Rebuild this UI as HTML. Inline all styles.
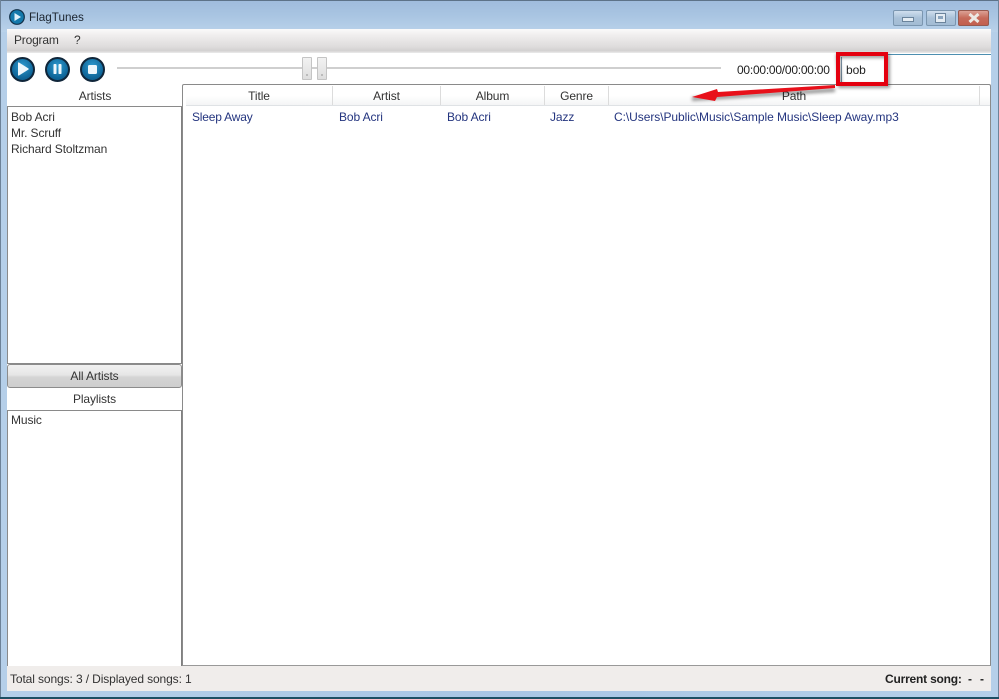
<!DOCTYPE html>
<html>
<head>
<meta charset="utf-8">
<style>
html,body{margin:0;padding:0;background:#fff}
#w{position:relative;width:999px;height:699px;overflow:hidden;font:12px "Liberation Sans",sans-serif;letter-spacing:-.11px;color:#222;background:linear-gradient(90deg,#b5cfe9,#a9c6e4 50%,#b5cfe9)}
#w div{position:absolute;box-sizing:border-box}
.t{white-space:nowrap;line-height:14px;height:14px}
.c{text-align:center}
.b{color:#24357f}
.btn{width:25px;height:25px;border-radius:50%;background:radial-gradient(circle at 50% 35%,#2f9bd0,#0d6396 70%);border:2px solid #10263a;top:57px}
.th{width:10px;height:23px;top:57px;border:1px solid #c4c4c4;background:linear-gradient(#f2f2f2,#dedede);border-radius:1px}
.th:after{content:"";position:absolute;left:3px;bottom:3px;width:2px;height:2px;background:#bbb}
.sep{top:86px;width:1px;height:19px;background:#dcdcdc}
.wb{top:10px;height:16px;border:1px solid #7b96b0;border-radius:2px;background:linear-gradient(#d0dfee,#a9c1d8 50%,#a3bcd4)}
</style>
</head>
<body>
<div id="w">
<div style="left:0;top:0;width:999px;height:32px;background:linear-gradient(#9fbbdc,#a9c5e2 50%,#b9d2ea)"></div>
<div style="left:0;top:0;width:999px;height:1px;background:#5d7288"></div>
<div style="left:0;top:0;width:1px;height:699px;background:#6d8298"></div>
<div style="left:998px;top:0;width:1px;height:699px;background:#6d8298"></div>
<div style="left:0;top:697px;width:999px;height:2px;background:#1d4f63"></div>

<svg style="position:absolute;left:9px;top:9px" width="16" height="16" viewBox="0 0 16 16"><circle cx="8" cy="8" r="7.3" fill="#1479ac" stroke="#123049" stroke-width="1.2"/><path d="M5.5 4 L12 8 L5.5 12Z" fill="#dff1fb"/></svg>
<div class="t" style="left:29px;top:11px;font-size:11.7px;letter-spacing:0;color:#1c2530">FlagTunes</div>

<div style="left:7px;top:29px;width:984px;height:637px;background:#fff"></div>
<div style="left:7px;top:29px;width:984px;height:24px;background:linear-gradient(#fbfafa 0,#f0eeee 25%,#dedcdc 75%,#d2d0d0 90%,#ececec 100%)"></div>
<div class="t" style="left:14px;top:33px;letter-spacing:-.2px;color:#333">Program</div>
<div class="t" style="left:74px;top:33px;color:#333">?</div>

<div style="left:838px;top:54px;width:153px;height:1px;background:#4d8fb0"></div>

<div class="btn" style="left:10px"></div>
<div class="btn" style="left:45px"></div>
<div class="btn" style="left:80px"></div>
<svg style="position:absolute;left:0;top:0" width="120" height="90" viewBox="0 0 120 90"><path d="M18 63 Q18 62 19 62.5 L28.5 68.5 Q29 69 28.5 69.5 L19 75.5 Q18 76 18 75Z" fill="#eef7fc"/><rect x="53.5" y="64" width="3" height="10" rx=".8" fill="#eef7fc"/><rect x="58.5" y="64" width="3" height="10" rx=".8" fill="#eef7fc"/><rect x="88" y="65" width="9" height="9" rx="1.5" fill="#eef7fc"/></svg>

<div style="left:117px;top:67px;width:604px;height:2px;background:#cfcfcf"></div>
<div class="th" style="left:302px"></div>
<div class="th" style="left:317px"></div>

<div class="t" style="left:737px;top:63px;letter-spacing:-.24px;color:#222">00:00:00/00:00:00</div>
<div style="left:841px;top:57px;width:1px;height:26px;background:#7f97ab"></div>
<div class="t" style="left:846px;top:63px;color:#222">bob</div>

<div class="t c" style="left:8px;top:89px;width:174px;color:#333">Artists</div>
<div style="left:7px;top:106px;width:176px;height:258px;background:#fff;border:1px solid #8a8a8a;border-right:2px solid #808080"></div>
<div class="t" style="left:11px;top:110px;color:#333">Bob Acri</div>
<div class="t" style="left:11px;top:126px;color:#333">Mr. Scruff</div>
<div class="t" style="left:11px;top:142px;color:#333">Richard Stoltzman</div>

<div style="left:7px;top:364px;width:175px;height:24px;border:1px solid #8c8c8c;border-radius:3px;background:linear-gradient(#f1f1f1,#e6e6e6 45%,#d4d4d4 55%,#cecece)"></div>
<div class="t c" style="left:7px;top:369px;width:175px;color:#333">All Artists</div>
<div class="t c" style="left:7px;top:392px;width:175px;color:#333">Playlists</div>
<div style="left:7px;top:410px;width:176px;height:256px;background:#fff;border:1px solid #8a8a8a;border-right:2px solid #808080;border-bottom:none"></div>
<div class="t" style="left:11px;top:413px;color:#333">Music</div>

<div style="left:182px;top:84px;width:809px;height:582px;background:#fff;border:1px solid #8a8a8a;border-bottom:1px solid #999;border-radius:2px 2px 0 0"></div>
<div style="left:186px;top:86px;width:804px;height:20px;background:linear-gradient(#fff,#fff 50%,#f4f5f6);border-bottom:1px solid #dfe2e5"></div>
<div class="sep" style="left:332px"></div>
<div class="sep" style="left:440px"></div>
<div class="sep" style="left:544px"></div>
<div class="sep" style="left:608px"></div>
<div class="sep" style="left:979px"></div>
<div class="t c" style="left:186px;top:89px;width:146px;color:#333">Title</div>
<div class="t c" style="left:333px;top:89px;width:107px;color:#333">Artist</div>
<div class="t c" style="left:441px;top:89px;width:103px;color:#333">Album</div>
<div class="t c" style="left:545px;top:89px;width:63px;color:#333">Genre</div>
<div class="t c" style="left:609px;top:89px;width:370px;color:#333">Path</div>

<div class="t b" style="left:192px;top:110px;letter-spacing:-.2px">Sleep Away</div>
<div class="t b" style="left:339px;top:110px">Bob Acri</div>
<div class="t b" style="left:447px;top:110px">Bob Acri</div>
<div class="t b" style="left:550px;top:110px">Jazz</div>
<div class="t b" style="left:614px;top:110px;letter-spacing:-.06px">C:\Users\Public\Music\Sample Music\Sleep Away.mp3</div>

<div style="left:7px;top:666px;width:984px;height:25px;background:#f0edeb"></div>
<div class="t" style="left:10px;top:672px;color:#333">Total songs: 3 / Displayed songs: 1</div>
<div class="t" style="left:885px;top:672px;font-weight:bold;letter-spacing:-.2px;color:#222">Current song:</div>
<div class="t" style="left:968px;top:672px;font-weight:bold;color:#222">-</div>
<div class="t" style="left:980px;top:672px;font-weight:bold;color:#222">-</div>

<div class="wb" style="left:893px;width:30px"></div>
<div style="left:902px;top:17px;width:12px;height:5px;background:#e4ecf3;border:1px solid #6b849c"></div>
<div class="wb" style="left:926px;width:30px"></div>
<div style="left:935px;top:13px;width:11px;height:10px;background:#e4ecf3;border:1px solid #6b849c"></div>
<div style="left:938px;top:16px;width:5px;height:3px;background:#8aa4bd"></div>
<div class="wb" style="left:958px;width:31px;border-color:#96594e;background:linear-gradient(#dca195,#c66a5a 50%,#c25f4e)"></div>
<svg style="position:absolute;left:967px;top:12px" width="14" height="12" viewBox="0 0 14 12"><path d="M2.5 2 L11.5 10 M11.5 2 L2.5 10" stroke="#ece9e4" stroke-width="3"/></svg>

<svg style="position:absolute;left:0;top:0" width="999" height="120" viewBox="0 0 999 120">
<defs><filter id="s" x="-20%" y="-20%" width="140%" height="140%"><feGaussianBlur stdDeviation="1.5"/></filter></defs>
<path d="M838 56 H888 V86 H840Z M692 99 L835 90" fill="none" stroke="#000" stroke-opacity=".4" stroke-width="4" filter="url(#s)"/>
<path d="M835 85 L718 92 L717 89 L692 97 L715 101 L717 97 L835 88 Z" fill="#e8101a"/>
<rect x="838" y="54" width="48" height="30" fill="none" stroke="#e4000f" stroke-width="4"/>
</svg>
</div>
</body>
</html>
